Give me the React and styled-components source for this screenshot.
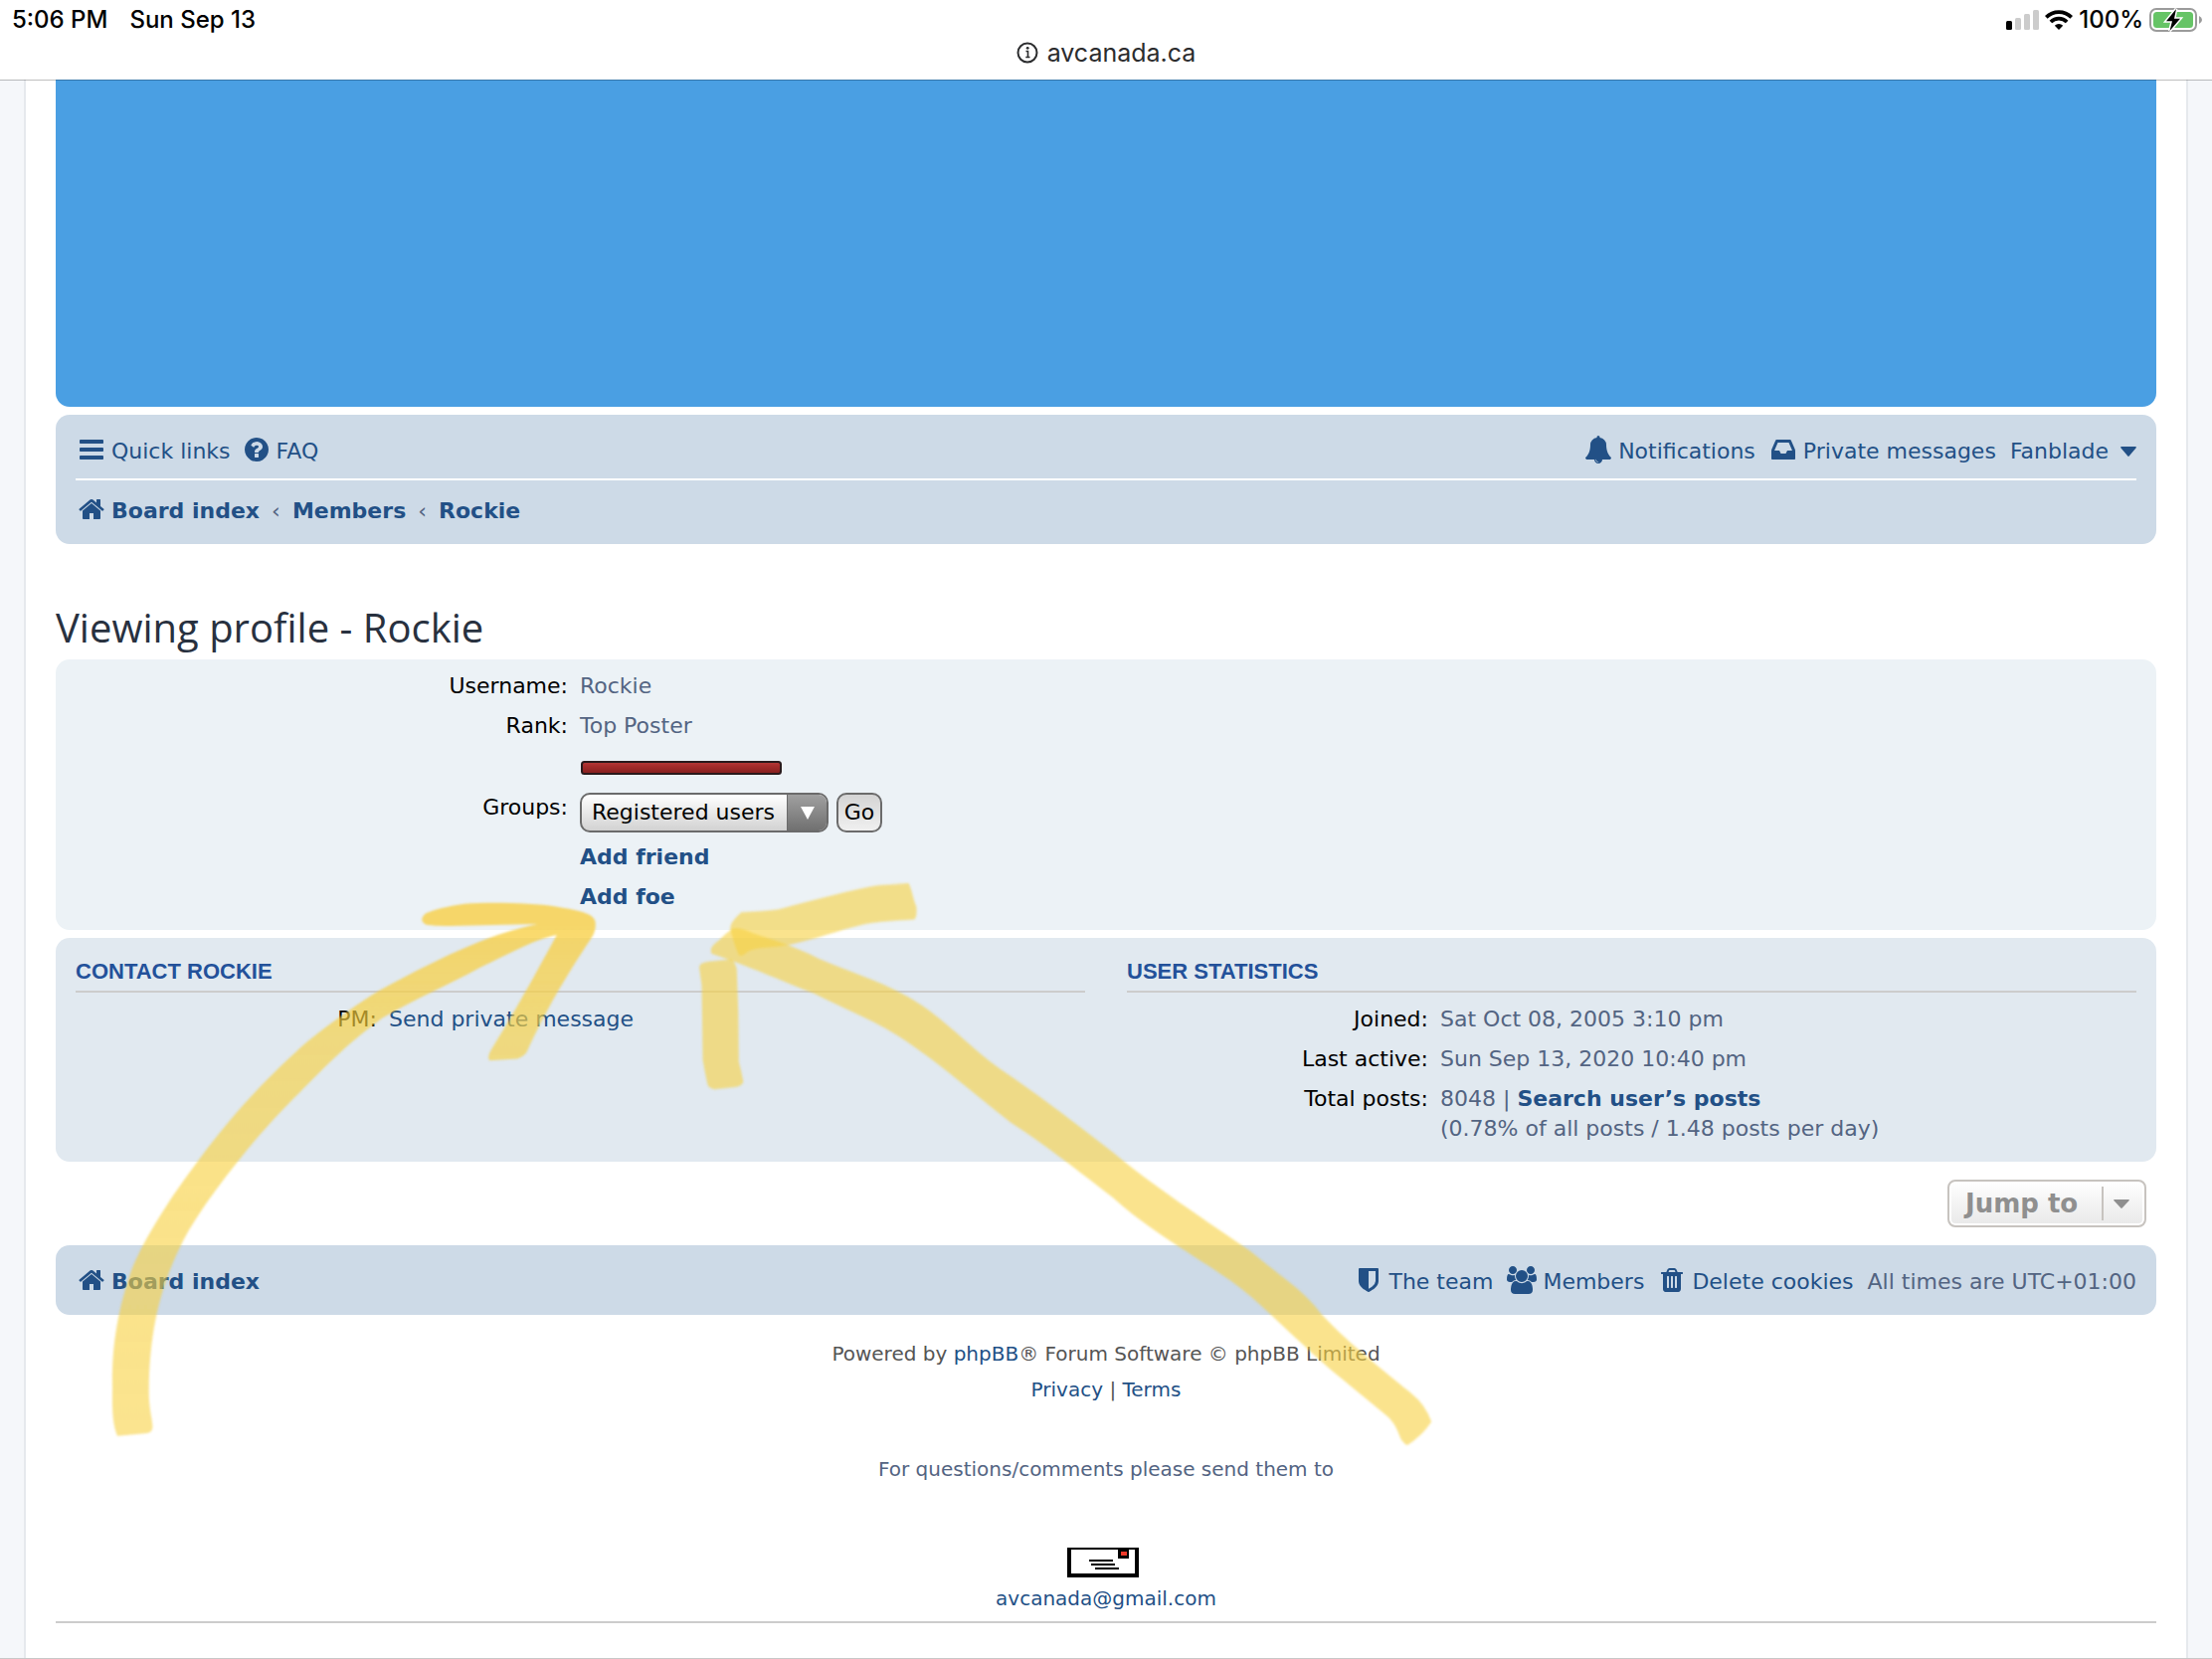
import React from "react";
import styled, { createGlobalStyle } from "styled-components";

const GlobalStyle = createGlobalStyle`
  *, *::before, *::after { box-sizing: border-box; }
  html, body { margin: 0; padding: 0; background: #f5f7fa; }
  body { font-family: "DejaVu Sans", Verdana, sans-serif; font-size: 22px; line-height: 30px; color: #536482; }
  h2, h3, p, dl, dt, dd, ul { margin: 0; padding: 0; }
  ul { list-style: none; }
  button, select { font: inherit; cursor: pointer; }
`;

const Screen = styled.div`
  position: relative;
  display: flex;
  flex-direction: column;
  min-height: 100vh;
  border-bottom: 1px solid #c8c8c8;
`;

const BrowserHeader = styled.header`
  position: relative;
  background: #ffffff;
  box-shadow: 0 1px 0 rgba(0, 0, 0, 0.25);
  font-family: Inter, sans-serif;
  color: #000000;
`;

const StatusRow = styled.div`
  display: flex;
  align-items: center;
  justify-content: space-between;
  height: 40px;
  padding: 0 9px 0 12px;
  font-size: 24px;
  font-weight: 500;
`;

const StatusGroup = styled.div`
  display: flex;
  align-items: center;
  gap: ${(p) => p.$gap};
`;

const AddressRow = styled.div`
  display: flex;
  align-items: center;
  justify-content: center;
  gap: 9px;
  height: 40px;
  padding-bottom: 14px;
  font-size: 25px;
  color: #2b2c2e;
`;

const Wrap = styled.div`
  flex: 1;
  display: flex;
  flex-direction: column;
  margin: 0 24px;
  padding: 0 30px;
  background: #ffffff;
  border: solid #e6e9ed;
  border-width: 0 2px;
`;

const Banner = styled.div`
  height: 329px;
  background: #4a9fe3;
  border-radius: 0 0 14px 14px;
`;

const NavBar = styled.nav`
  padding: ${(p) => (p.$compact ? "4px 20px 0" : "10px 20px 2px")};
  margin-top: ${(p) => (p.$compact ? "18px" : "8px")};
  background: #cddae7;
  border-radius: 14px;
`;

const NavRow = styled.div`
  display: flex;
  align-items: center;
  justify-content: space-between;
  height: ${(p) => p.$height};
  border-bottom: ${(p) => (p.$ruled ? "2px solid #ffffff" : "0")};
`;

const NavList = styled.ul`
  display: flex;
  align-items: center;
  gap: ${(p) => p.$gap || "12px"};
`;

const NavItem = styled.li`
  display: flex;
  align-items: center;
`;

const Link = styled.a`
  color: #225086;
  text-decoration: none;
  font-weight: ${(p) => (p.$bold ? "700" : "400")};
`;

const NavLink = styled(Link)`
  display: flex;
  align-items: center;
  gap: 6px;
  height: 30px;
  white-space: nowrap;
  padding-left: ${(p) => (p.$lead ? "2px" : "0")};
`;

const UserMenu = styled.button`
  display: flex;
  align-items: center;
  gap: 12px;
  padding: 0;
  border: 0;
  background: none;
  color: #225086;
`;

const Glyph = styled.svg`
  width: ${(p) => p.$width || "28px"};
  height: 28px;
  margin-bottom: 5px;
  fill: currentColor;
`;

const Title = styled.h2`
  margin: 60px 0 8px;
  font-family: "Open Sans", sans-serif;
  font-size: 40px;
  font-weight: 400;
  line-height: 48px;
  color: #28313f;
`;

const Panel = styled.section`
  padding: ${(p) => p.$padding};
  margin-bottom: ${(p) => p.$after || "0"};
  background: ${(p) => p.$background};
  border-radius: 14px;
`;

const Columns = styled.div`
  display: grid;
  grid-template-columns: 1fr 1fr;
  gap: 42px;
`;

const SectionTitle = styled.h3`
  margin-bottom: 12px;
  padding-bottom: 4px;
  border-bottom: 2px solid #cccccc;
  font-family: "Liberation Sans", Arial, sans-serif;
  font-size: 22px;
  font-weight: 700;
  text-transform: uppercase;
  color: #23519a;
`;

const Details = styled.dl`
  display: grid;
  grid-template-columns: ${(p) => p.$label} 1fr;
  gap: 10px 12px;
`;

const Term = styled.dt`
  text-align: right;
  color: #000000;
`;

const Value = styled.dd`
  grid-column: 2;
`;

const RankBar = styled.svg`
  display: block;
  width: 202px;
  height: 14px;
  margin: 20px 0 8px 1px;
`;

const GroupForm = styled.form`
  display: flex;
  align-items: center;
  gap: 8px;
  height: 40px;
`;

const SelectBox = styled.span`
  position: relative;
  display: inline-flex;
`;

const Select = styled.select`
  appearance: none;
  width: 250px;
  height: 40px;
  padding: 0 46px 0 10px;
  border: 2px solid #6b6b6b;
  border-radius: 10px;
  background: linear-gradient(#ffffff, #d2d2d2);
  color: #000000;
`;

const SelectArrow = styled.span`
  position: absolute;
  top: 2px;
  right: 2px;
  bottom: 2px;
  display: flex;
  align-items: center;
  justify-content: center;
  width: 40px;
  border-left: 1px solid #6b6b6b;
  border-radius: 0 8px 8px 0;
  background: linear-gradient(#a0a0a0, #707070);
  pointer-events: none;
`;

const GoButton = styled.button`
  width: 46px;
  height: 40px;
  padding: 0;
  border: 2px solid #6b6b6b;
  border-radius: 10px;
  background: linear-gradient(#d4d4d4, #f0f0f0);
  color: #000000;
`;

const ActionBar = styled.div`
  display: flex;
  justify-content: flex-end;
  margin-top: 18px;
  padding-right: 10px;
`;

const JumpButton = styled.button`
  display: flex;
  align-items: center;
  justify-content: space-between;
  width: 200px;
  height: 48px;
  padding: 0 15px 0 16px;
  border: 2px solid #c7c3bf;
  border-radius: 8px;
  background: linear-gradient(#ffffff, #e9e9e9);
  box-shadow: inset 0 0 0 2px #ffffff;
  font-size: 26px;
  font-weight: 600;
  color: #8f8f8f;
`;

const JumpCaret = styled.span`
  display: flex;
  align-items: center;
  height: 34px;
  padding-left: 10px;
  border-left: 2px solid #c7c3bf;
`;

const Footer = styled.footer`
  display: flex;
  flex-direction: column;
  align-items: center;
  padding: 21px 0 5px;
  border-bottom: 2px solid #cccccc;
  font-size: 20px;
  line-height: 36px;
  text-align: center;
`;

const Credit = styled.p`
  color: #555555;
`;

const Contact = styled.p`
  margin-top: 44px;
`;

const Envelope = styled.svg`
  width: 72px;
  height: 30px;
  margin: 61px 6px 3px 0;
`;

const Annotations = styled.svg`
  position: absolute;
  top: 0;
  left: 0;
  width: 1600px;
  height: 1500px;
  pointer-events: none;
`;

const glyphs = {
  bars: "M1664 1344v128q0 26-19 45t-45 19h-1408q-26 0-45-19t-19-45v-128q0-26 19-45t45-19h1408q26 0 45 19t19 45zm0-512v128q0 26-19 45t-45 19h-1408q-26 0-45-19t-19-45v-128q0-26 19-45t45-19h1408q26 0 45 19t19 45zm0-512v128q0 26-19 45t-45 19h-1408q-26 0-45-19t-19-45v-128q0-26 19-45t45-19h1408q26 0 45 19t19 45z",
  question:
    "M1024 1376v-192q0-14-9-23t-23-9h-192q-14 0-23 9t-9 23v192q0 14 9 23t23 9h192q14 0 23-9t9-23zm256-672q0-88-55.5-163t-138.5-116-170-41q-243 0-371 213-15 24 8 42l132 100q7 6 19 6 16 0 25-12 53-68 86-92 34-24 86-24 48 0 85.5 26t37.5 59q0 38-20 61t-68 45q-63 28-115.5 86.5t-52.5 125.5v36q0 14 9 23t23 9h192q14 0 23-9t9-23q0-19 21.5-49.5t54.5-49.5q32-18 49-28.5t46-35 44.5-48 28-60.5 12.5-81zm384 192q0 209-103 385.5t-279.5 279.5-385.5 103-385.5-103-279.5-279.5-103-385.5 103-385.5 279.5-279.5 385.5-103 385.5 103 279.5 279.5 103 385.5z",
  home: "M1472 992v480q0 26-19 45t-45 19h-384v-384h-256v384h-384q-26 0-45-19t-19-45v-480q0-1 .5-3t.5-3l575-474 575 474q1 2 1 6zm223-69l-62 74q-8 9-21 11h-3q-13 0-21-7l-692-577-692 577q-12 8-24 7-13-2-21-11l-62-74q-8-10-7-23.5t11-21.5l719-599q32-26 76-26t76 26l244 204v-195q0-14 9-23t23-9h192q14 0 23 9t9 23v408l219 182q10 8 11 21.5t-7 23.5z",
  bell: "M912 1696q0-16-16-16-59 0-101.5-42.5t-42.5-101.5q0-16-16-16t-16 16q0 73 51.5 124.5t124.5 51.5q16 0 16-16zm816-288q0 52-38 90t-90 38h-448q0 106-75 181t-181 75-181-75-75-181h-448q-52 0-90-38t-38-90q50-42 91-88t85-119.5 74.5-158.5 50-206 19.5-260q0-152 117-282.5t307-158.5q-8-19-8-39 0-40 28-68t68-28 68 28 28 68q0 20-8 39 190 28 307 158.5t117 282.5q0 139 19.5 260t50 206 74.500 158.500 85 119.500 91 88z",
  inbox:
    "M1151 960h316q-1-3-2.500-8t-2.500-8l-212-496h-708l-212 496q-1 2-2.500 8t-2.500 8h316l95 192h320zm513 30v482q0 26-19 45t-45 19h-1408q-26 0-45-19t-19-45v-482q0-62 25-123l238-552q10-25 36.500-42t52.500-17h832q26 0 52.500 17t36.500 42l238 552q25 61 25 123z",
  shield:
    "M1344 960v-640h-448v1137q119-63 213-137 235-184 235-360zm192-768v768q0 86-33.500 170.500t-83 150-118 127.500-126.500 103-121 77.500-89.500 49.500-42.500 20q-12 6-26 6t-26-6q-16-7-42.500-20t-89.500-49.500-121-77.500-126.500-103-118-127.500-83-150-33.500-170.500v-768q0-26 19-45t45-19h1152q26 0 45 19t19 45z",
  group:
    "M529 896q-162 5-265 128h-134q-82 0-138-40.500t-56-118.500q0-353 124-353 6 0 43.500 21t97.500 42.500 119 21.500q67 0 133-23-5 37-5 66 0 139 81 256zm1071 637q0 120-73 189.500t-194 69.500h-874q-121 0-194-69.500t-73-189.500q0-53 3.500-103.500t14-109 26.500-108.500 43-97.500 62-81 85.500-53.500 111.500-20q10 0 43 21.500t73 48 107 48 135 21.500 135-21.500 107-48 73-48 43-21.500q61 0 111.500 20t85.500 53.500 62 81 43 97.500 26.500 108.500 14 109 3.500 103.500zm-1024-1277q0 106-75 181t-181 75-181-75-75-181 75-181 181-75 181 75 75 181zm704 384q0 159-112.500 271.500t-271.500 112.500-271.500-112.500-112.500-271.500 112.500-271.500 271.500-112.500 271.500 112.500 112.500 271.500zm576 225q0 78-56 118.500t-138 40.500h-134q-103-123-265-128 81-117 81-256 0-29-5-66 66 23 133 23 59 0 119-21.500t97.500-42.500 43.500-21q124 0 124 353zm-128-609q0 106-75 181t-181 75-181-75-75-181 75-181 181-75 181 75 75 181z",
  trash:
    "M704 1376v-704q0-14-9-23t-23-9h-64q-14 0-23 9t-9 23v704q0 14 9 23t23 9h64q14 0 23-9t9-23zm256 0v-704q0-14-9-23t-23-9h-64q-14 0-23 9t-9 23v704q0 14 9 23t23 9h64q14 0 23-9t9-23zm256 0v-704q0-14-9-23t-23-9h-64q-14 0-23 9t-9 23v704q0 14 9 23t23 9h64q14 0 23-9t9-23zm-544-992h448l-48-117q-7-9-17-11h-317q-10 2-17 11zm928 32v64q0 14-9 23t-23 9h-96v948q0 83-47 143.500t-113 60.500h-832q-66 0-113-58.500t-47-141.500v-952h-96q-14 0-23-9t-9-23v-64q0-14 9-23t23-9h309l70-167q15-37 54-63t79-26h320q40 0 79 26t54 63l70 167h309q14 0 23 9t9 23z",
};

const Icon = ({ name }) =>
  name === "group" ? (
    <Glyph $width="30px" viewBox="-64 0 1920 1792" aria-hidden="true">
      <path d={glyphs.group} />
    </Glyph>
  ) : (
    <Glyph viewBox="0 0 1792 1792" aria-hidden="true">
      <path d={glyphs[name]} />
    </Glyph>
  );

const Caret = ({ width, height, color }) => (
  <svg width={width} height={height} viewBox="0 0 16 10" preserveAspectRatio="none" aria-hidden="true">
    <path d="M1 0H15Q16.500 .5 15.500 1.500L8.700 9.500Q8 10.300 7.300 9.500L.5 1.500Q-.5 .5 1 0Z" fill={color} />
  </svg>
);

const Signal = () => (
  <svg width="33" height="20" viewBox="0 0 33 20" aria-hidden="true">
    <rect x="0" y="11" width="6" height="9" rx="1.500" fill="#000" />
    <rect x="9" y="8" width="6" height="12" rx="1.500" fill="#ccc" />
    <rect x="18" y="4" width="6" height="16" rx="1.500" fill="#ccc" />
    <rect x="27" y="0" width="6" height="20" rx="1.500" fill="#ccc" />
  </svg>
);

const Wifi = () => (
  <svg width="28" height="20" viewBox="0 0 28 20" fill="none" stroke="#000" strokeWidth="3.800" aria-hidden="true">
    <path d="M1.300 7.300a18 18 0 0 1 25.400 0" />
    <path d="M5.900 12a11.500 11.500 0 0 1 16.200 0" />
    <path d="M14 20l-4.200-4.300a6 6 0 0 1 8.400 0z" fill="#000" stroke="none" />
  </svg>
);

const Battery = () => (
  <svg width="54" height="24" viewBox="0 0 54 24" aria-hidden="true">
    <rect x="1" y="1" width="46" height="22" rx="6" fill="none" stroke="#9b9b9b" strokeWidth="2" />
    <path d="M50 8q3 1.500 3 4t-3 4z" fill="#9b9b9b" />
    <rect x="4" y="4" width="40" height="16" rx="3.500" fill="#66c466" />
    <path d="M27 1L17 13.200H23L20.500 23L31 10.800H25Z" fill="#000" stroke="#fff" strokeWidth="3" paintOrder="stroke" />
  </svg>
);

const InfoIcon = () => (
  <svg width="22" height="22" viewBox="0 0 22 22" fill="none" stroke="#2b2c2e" aria-hidden="true">
    <circle cx="11" cy="11" r="9.500" strokeWidth="2" />
    <path d="M9.500 9.500H11.500V15.500M9.300 15.500H13.500" strokeWidth="1.600" />
    <circle cx="11.200" cy="6.300" r="1.400" fill="#2b2c2e" stroke="none" />
  </svg>
);

const navLeft = [
  { icon: "bars", label: "Quick links" },
  { icon: "question", label: "FAQ" },
];

const navRight = [
  { icon: "bell", label: "Notifications" },
  { icon: "inbox", label: "Private messages" },
];

const footerLinks = [
  { icon: "shield", label: "The team" },
  { icon: "group", label: "Members" },
  { icon: "trash", label: "Delete cookies" },
];

const NavItems = ({ items, lead }) =>
  items.map((item, i) => (
    <NavItem key={item.label}>
      <NavLink href="#" $lead={lead && i === 0}>
        <Icon name={item.icon} />
        {item.label}
      </NavLink>
    </NavItem>
  ));

const HandDrawnArrows = () => (
  <Annotations viewBox="0 0 1600 1500" aria-hidden="true">
    <defs>
      <linearGradient id="marker" gradientUnits="userSpaceOnUse" x1="0" y1="130" x2="0" y2="1473">
        <stop offset="0" stopColor="#f8ce3e" stopOpacity="0.76" />
        <stop offset="0.22" stopColor="#f7d03f" stopOpacity="0.64" />
        <stop offset="1" stopColor="#f7d03f" stopOpacity="0.58" />
      </linearGradient>
      <filter id="soft" x="-5%" y="-5%" width="110%" height="110%">
        <feGaussianBlur stdDeviation="1" />
      </filter>
    </defs>
    <g filter="url(#soft)">
      <path
        transform="translate(40 880) scale(.4592 .3827)"
        fill="url(#marker)"
        d="M170 1473L235 1466Q247 1462 247 1450C247 1430 238 1400 239 1350C240 1230 255 1100 310 970C350 870 470 690 545 600C620 510 660 455 750 375C830 320 900 285 960 245C1040 200 1080 170 1132 157C1090 250 1030 380 990 455Q978 478 985 487L1045 482Q1058 478 1066 465C1110 350 1150 270 1205 170Q1220 145 1216 120C1212 100 1180 92 1130 82C1080 72 980 70 930 75C890 82 865 90 845 100Q828 118 846 130Q870 134 900 133L1090 128C1000 150 900 200 740 305C680 350 600 420 560 465C500 530 420 630 350 745C290 840 230 950 200 1040C160 1180 158 1280 159 1350C158 1410 160 1445 170 1473Z"
      />
      <g transform="translate(680 860) scale(.5102 .3954)" fill="#f7d03f" fillOpacity="0.6">
        <path d="M128 145Q160 143 200 138C260 118 350 85 400 76L458 72C464 85 466 110 473 130Q475 160 468 163C430 166 400 168 370 175C320 190 270 215 220 228C190 235 155 232 140 245Q125 262 122 250C115 230 110 205 106 185Q106 170 128 145Z" />
        <path d="M112 186Q125 182 150 198C190 215 230 230 280 262C340 295 400 320 440 348C520 400 560 470 640 545C720 615 790 685 860 755C930 830 1010 900 1130 1005C1200 1080 1240 1110 1270 1165C1340 1260 1400 1315 1450 1370Q1475 1395 1488 1440Q1470 1475 1440 1500Q1428 1490 1425 1475Q1415 1440 1400 1425C1330 1350 1280 1300 1240 1250C1180 1180 1130 1110 1070 1062C980 985 920 940 860 870C780 790 720 730 660 680C590 610 530 540 450 470C400 425 340 395 270 350C200 315 150 285 70 250Q62 235 85 215Q100 195 112 186Z" />
        <path d="M45 285Q45 272 65 270L108 264Q115 270 119 288L122 400L123 525Q128 550 132 575Q130 588 110 590L75 595Q62 592 61 580Q56 550 52 520L50 330Z" />
      </g>
    </g>
  </Annotations>
);

export default function App() {
  return (
    <>
      <GlobalStyle />
      <Screen>
        <BrowserHeader>
          <StatusRow>
            <StatusGroup $gap="22px">
              <span>5:06 PM</span>
              <span>Sun Sep 13</span>
            </StatusGroup>
            <StatusGroup $gap="6px">
              <Signal />
              <Wifi />
              <span>100%</span>
              <Battery />
            </StatusGroup>
          </StatusRow>
          <AddressRow>
            <InfoIcon />
            <span>avcanada.ca</span>
          </AddressRow>
        </BrowserHeader>

        <Wrap>
          <Banner />
          <NavBar aria-label="Main">
            <NavRow $height="56px" $ruled>
              <NavList>
                <NavItems items={navLeft} lead />
              </NavList>
              <NavList $gap="14px">
                <NavItems items={navRight} />
                <NavItem>
                  <UserMenu type="button">
                    Fanblade
                    <Caret width="16" height="10" color="#225086" />
                  </UserMenu>
                </NavItem>
              </NavList>
            </NavRow>
            <NavRow $height="62px">
              <NavList>
                <NavItem>
                  <NavLink href="#" $bold $lead>
                    <Icon name="home" />
                    Board index
                  </NavLink>
                </NavItem>
                <NavItem aria-hidden="true">‹</NavItem>
                <NavItem>
                  <NavLink href="#" $bold>Members</NavLink>
                </NavItem>
                <NavItem aria-hidden="true">‹</NavItem>
                <NavItem>
                  <NavLink href="#" $bold>Rockie</NavLink>
                </NavItem>
              </NavList>
            </NavRow>
          </NavBar>

          <Title>Viewing profile - Rockie</Title>

          <Panel $background="#ecf2f6" $padding="12px 20px 18px" $after="8px">
            <Details $label="495px">
              <Term>Username:</Term>
              <Value>Rockie</Value>
              <Term>Rank:</Term>
              <Value>
                Top Poster
                <RankBar viewBox="0 0 202 14" aria-hidden="true">
                  <defs>
                    <linearGradient id="rank" x1="0" y1="0" x2="0" y2="1">
                      <stop offset="0" stopColor="#b83a38" />
                      <stop offset="0.4" stopColor="#a32a29" />
                      <stop offset="1" stopColor="#84201f" />
                    </linearGradient>
                  </defs>
                  <rect x="1" y="1" width="200" height="12" rx="2.500" fill="url(#rank)" stroke="#2a1a1c" strokeWidth="2" />
                </RankBar>
              </Value>
              <Term>
                <label htmlFor="groups">Groups:</label>
              </Term>
              <Value>
                <GroupForm onSubmit={(e) => e.preventDefault()}>
                  <SelectBox>
                    <Select id="groups" defaultValue="registered">
                      <option value="registered">Registered users</option>
                    </Select>
                    <SelectArrow>
                      <svg width="14" height="13" viewBox="0 0 14 13" aria-hidden="true">
                        <path d="M0 0H14L7 13Z" fill="#fff" />
                      </svg>
                    </SelectArrow>
                  </SelectBox>
                  <GoButton type="submit">Go</GoButton>
                </GroupForm>
              </Value>
              <Value>
                <Link href="#" $bold>Add friend</Link>
              </Value>
              <Value>
                <Link href="#" $bold>Add foe</Link>
              </Value>
            </Details>
          </Panel>

          <Panel $background="#e1e9f0" $padding="19px 20px 18px">
            <Columns>
              <div>
                <SectionTitle>Contact Rockie</SectionTitle>
                <Details $label="303px">
                  <Term>PM:</Term>
                  <Value>
                    <Link href="#">Send private message</Link>
                  </Value>
                </Details>
              </div>
              <div>
                <SectionTitle>User statistics</SectionTitle>
                <Details $label="303px">
                  <Term>Joined:</Term>
                  <Value>Sat Oct 08, 2005 3:10 pm</Value>
                  <Term>Last active:</Term>
                  <Value>Sun Sep 13, 2020 10:40 pm</Value>
                  <Term>Total posts:</Term>
                  <Value>
                    8048 | <Link href="#" $bold>Search user’s posts</Link>
                    <br />
                    (0.78% of all posts / 1.48 posts per day)
                  </Value>
                </Details>
              </div>
            </Columns>
          </Panel>

          <ActionBar>
            <JumpButton type="button">
              Jump to
              <JumpCaret>
                <Caret width="16" height="9" color="#8f8f8f" />
              </JumpCaret>
            </JumpButton>
          </ActionBar>

          <NavBar aria-label="Footer" $compact>
            <NavRow $height="66px">
              <NavLink href="#" $bold $lead>
                <Icon name="home" />
                Board index
              </NavLink>
              <NavList $gap="14px">
                <NavItems items={footerLinks} />
                <NavItem>All times are UTC+01:00</NavItem>
              </NavList>
            </NavRow>
          </NavBar>

          <Footer>
            <Credit>
              Powered by <Link href="#">phpBB</Link>® Forum Software © phpBB Limited
            </Credit>
            <Credit>
              <Link href="#">Privacy</Link> | <Link href="#">Terms</Link>
            </Credit>
            <Contact>For questions/comments please send them to</Contact>
            <Envelope viewBox="0 0 72 30" aria-hidden="true">
              <rect x="0" y="0" width="72" height="30" fill="#000" />
              <rect x="4" y="2" width="64" height="24" fill="#fff" />
              <rect x="51" y="1" width="11" height="10" fill="#000" />
              <rect x="54" y="4" width="6" height="4" fill="#f03a2a" />
              <path d="M22 13H46M24 17H48M28 21H52" stroke="#000" strokeWidth="2" />
            </Envelope>
            <Link href="#">avcanada@gmail.com</Link>
          </Footer>
        </Wrap>
        <HandDrawnArrows />
      </Screen>
    </>
  );
}
